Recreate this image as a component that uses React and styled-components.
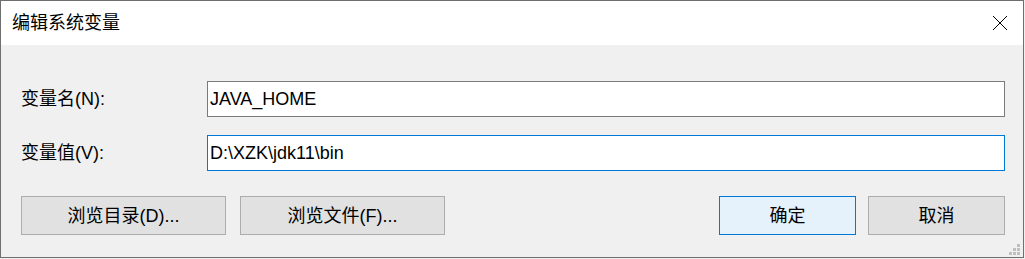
import React from 'react';
import styled, { createGlobalStyle } from 'styled-components';

const GlobalStyle = createGlobalStyle`
  body {
    margin: 0;
    background: #f0f0f0;
  }
`;

const font = `"Liberation Sans", "Noto Sans CJK SC", sans-serif`;

const Window = styled.div`
  position: relative;
  box-sizing: border-box;
  width: 1024px;
  height: 258px;
  border: 1px solid #6f6f6f;
  background: #f0f0f0;
  font-family: ${font};
  font-size: 18px;
  color: #000;
  display: flex;
  flex-direction: column;
`;

const TitleBar = styled.div`
  height: 44px;
  background: #fff;
  display: flex;
  align-items: center;
  justify-content: space-between;
  padding-left: 11px;
`;

const Title = styled.span`
  font-size: 18px;
  line-height: 1;
  margin-top: -1px;
`;

const CloseButton = styled.div`
  width: 46px;
  height: 44px;
  display: flex;
  align-items: center;
  justify-content: center;
`;

const Body = styled.div`
  flex: 1;
  display: flex;
  flex-direction: column;
  padding: 36px 18px 0 20px;
`;

const Field = styled.div`
  display: flex;
  align-items: center;
  margin-bottom: ${(p) => p.gap}px;
`;

const Label = styled.label`
  width: 186px;
  line-height: 1;
`;

const Input = styled.div`
  box-sizing: border-box;
  flex: 1;
  height: 36px;
  background: #fff;
  border: 1px solid ${(p) => (p.focused ? '#0078d7' : '#7a7a7a')};
  padding: 0 0 0 2px;
  display: flex;
  align-items: center;
  line-height: 1;
`;

const ButtonRow = styled.div`
  display: flex;
  align-items: center;
`;

const Group = styled.div`
  display: flex;
  gap: ${(p) => p.gap}px;
  margin-left: ${(p) => (p.right ? 'auto' : '0')};
`;

const Button = styled.div`
  box-sizing: border-box;
  width: ${(p) => p.w}px;
  height: 39px;
  display: flex;
  align-items: center;
  justify-content: center;
  background: ${(p) => (p.primary ? '#e5f1fb' : '#e1e1e1')};
  border: 1px solid ${(p) => (p.primary ? '#0078d7' : '#adadad')};
  line-height: 1;
`;

const Grip = styled.div`
  position: absolute;
  right: 3px;
  bottom: 2px;
  display: grid;
  grid-template-columns: repeat(3, 3px);
  grid-template-rows: repeat(3, 3px);
  gap: 1px;
`;

const Dot = styled.span`
  background: ${(p) => (p.on ? '#bfbfbf' : 'transparent')};
`;

const gripMap = [0, 0, 1, 0, 1, 1, 1, 1, 1];

const App = () => (
  <>
    <GlobalStyle />
    <Window>
      <TitleBar>
        <Title>编辑系统变量</Title>
        <CloseButton>
          <svg width="16" height="16" viewBox="0 0 16 16">
            <path d="M1 1 L15 15 M15 1 L1 15" stroke="#000" strokeWidth="1" fill="none" />
          </svg>
        </CloseButton>
      </TitleBar>
      <Body>
        <Field gap={18}>
          <Label>变量名(N):</Label>
          <Input>JAVA_HOME</Input>
        </Field>
        <Field gap={25}>
          <Label>变量值(V):</Label>
          <Input focused>D:\XZK\jdk11\bin</Input>
        </Field>
        <ButtonRow>
          <Group gap={14}>
            <Button w={205}>浏览目录(D)...</Button>
            <Button w={205}>浏览文件(F)...</Button>
          </Group>
          <Group gap={12} right>
            <Button w={137} primary>确定</Button>
            <Button w={137}>取消</Button>
          </Group>
        </ButtonRow>
      </Body>
      <Grip>
        {gripMap.map((on, i) => (
          <Dot key={i} on={on} />
        ))}
      </Grip>
    </Window>
  </>
);

export default App;
